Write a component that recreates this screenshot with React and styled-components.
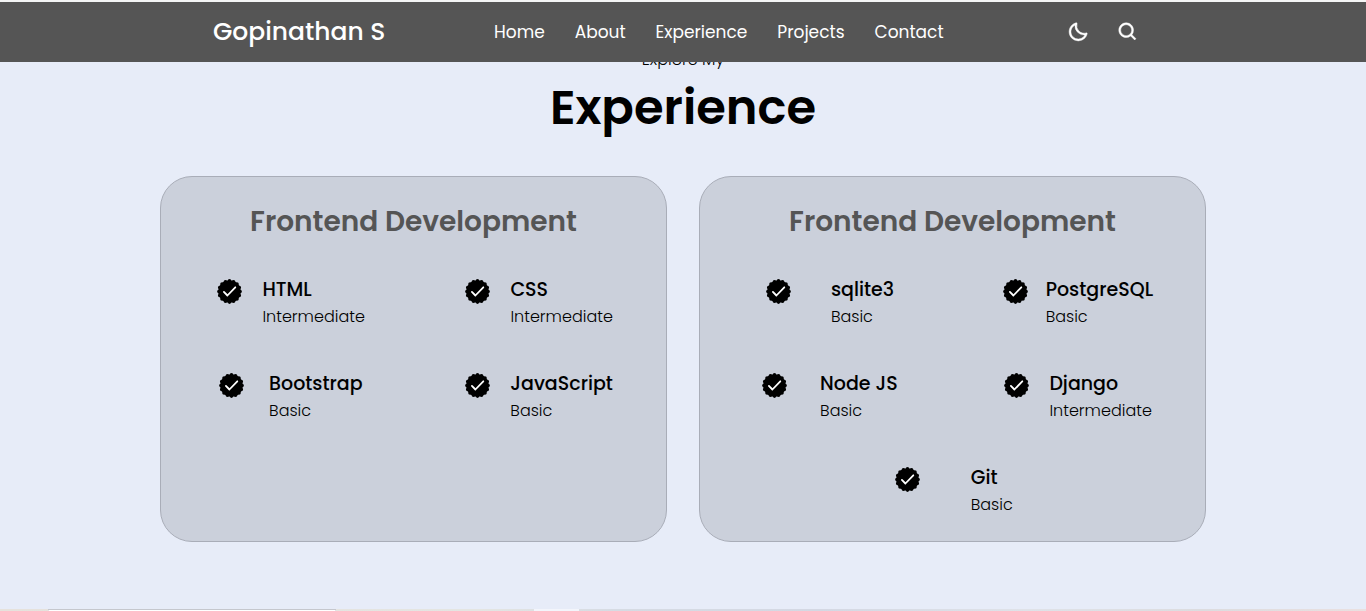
import React from "react";
import styled, { createGlobalStyle } from "styled-components";
import { BiMoon, BiSearch } from "react-icons/bi";

const GlobalStyle = createGlobalStyle`
  *, *::before, *::after { box-sizing: border-box; }
  body {
    margin: 0;
    background: #e7ecf8;
    color: #000;
    font-family: Poppins, Inter, "Open Sans", sans-serif;
  }
  h1, h2, h3, p, ul { margin: 0; padding: 0; }
  ul { list-style: none; }
`;

const Header = styled.header`
  position: sticky;
  top: 0;
  z-index: 1;
  border-top: 2px solid #f4f5f5;
  background: #555;
  color: #fff;
`;

const Bar = styled.div`
  display: grid;
  grid-template-columns: 281px auto 1fr;
  align-items: center;
  max-width: 940px;
  height: 60px;
  margin: 0 auto;
  padding-right: 14px;
`;

const Logo = styled.a`
  color: inherit;
  font-size: 25px;
  font-weight: 500;
  line-height: 40px;
  text-decoration: none;
  white-space: nowrap;
`;

const NavList = styled.ul`
  display: flex;
  gap: 30px;
`;

const NavLink = styled.a`
  color: inherit;
  font-size: 17px;
  font-weight: 400;
  line-height: 24px;
  text-decoration: none;
`;

const Actions = styled.div`
  display: flex;
  justify-content: flex-end;
  gap: 28px;
`;

const IconButton = styled.button`
  display: flex;
  padding: 0;
  border: 0;
  background: none;
  color: inherit;
  font-size: 22px;
  cursor: pointer;

  svg {
    overflow: visible;
    stroke: currentColor;
    stroke-width: 0.5px;
  }
`;

const Section = styled.section`
  max-width: 1046px;
  margin: -14px auto 0;
  padding-bottom: 67px;
`;

const Eyebrow = styled.p`
  font-size: 16px;
  font-weight: 300;
  line-height: 24px;
  text-align: center;
`;

const Title = styled.h1`
  font-size: 48px;
  font-weight: 600;
  line-height: 72px;
  text-align: center;
`;

const Cards = styled.div`
  display: grid;
  grid-template-columns: 1fr 1fr;
  gap: 32px;
  margin-top: 32px;
`;

const Card = styled.article`
  padding: 23px 42px 23px 45px;
  border: 1px solid #a9adb8;
  border-radius: 32px;
  background: #cbd0db;
`;

const CardTitle = styled.h2`
  margin: 0 0 32px -3px;
  color: #555;
  font-size: 28px;
  font-weight: 600;
  line-height: 44px;
  text-align: center;
  white-space: nowrap;
`;

const Skills = styled.ul`
  display: flex;
  flex-wrap: wrap;
  justify-content: center;
  gap: 40px 80px;
`;

const Skill = styled.li`
  display: flex;
  justify-content: space-around;
  width: 168px;
`;

const Badge = styled.svg`
  flex: none;
  width: 25px;
  height: 25px;
  margin-top: 3px;
`;

const SkillName = styled.h3`
  font-size: 19px;
  font-weight: 500;
  line-height: 27px;
`;

const SkillLevel = styled.p`
  font-size: 16px;
  font-weight: 300;
  line-height: 27px;
`;

const Preview = styled.div`
  display: flex;
  height: 2px;
  padding-left: 48px;
  background: linear-gradient(90deg, #e6e2dc, #e4e5e2 35%, #d6dbe3 45%, #d4d8e3 60%, #dfe2e8 75%, #dcdcdf 88%, #eae0e0);
`;

const PreviewPanel = styled.div`
  width: 288px;
  border: 1px solid #c5c7cd;
  border-bottom-color: #fff;
`;

const PreviewTab = styled.div`
  width: 45px;
  margin-left: 198px;
  background: #f3f5fb;
`;

const links = ["Home", "About", "Experience", "Projects", "Contact"];

const groups = [
  {
    id: "frontend",
    title: "Frontend Development",
    skills: [
      ["HTML", "Intermediate"],
      ["CSS", "Intermediate"],
      ["Bootstrap", "Basic"],
      ["JavaScript", "Basic"],
    ],
  },
  {
    id: "backend",
    title: "Frontend Development",
    skills: [
      ["sqlite3", "Basic"],
      ["PostgreSQL", "Basic"],
      ["Node JS", "Basic"],
      ["Django", "Intermediate"],
      ["Git", "Basic"],
    ],
  },
];

function CheckBadge() {
  return (
    <Badge viewBox="0 0 25 25" aria-hidden="true">
      <circle cx="12.5" cy="12.5" r="11.3" />
      <circle
        cx="12.5"
        cy="12.5"
        r="10.6"
        fill="none"
        stroke="#000"
        strokeWidth="3.6"
        strokeLinecap="round"
        pathLength="16"
        strokeDasharray="0 1"
      />
      <path
        d="M6.9 12.9l3.5 3.6 7.9-8.2"
        fill="none"
        stroke="#fff"
        strokeWidth="1.8"
        strokeLinecap="round"
        strokeLinejoin="round"
      />
    </Badge>
  );
}

export default function App() {
  return (
    <>
      <GlobalStyle />
      <Header>
        <Bar>
          <Logo href="#home">Gopinathan S</Logo>
          <nav>
            <NavList>
              {links.map((name) => (
                <li key={name}>
                  <NavLink href={`#${name.toLowerCase()}`}>{name}</NavLink>
                </li>
              ))}
            </NavList>
          </nav>
          <Actions>
            <IconButton type="button" aria-label="Dark mode">
              <BiMoon />
            </IconButton>
            <IconButton type="button" aria-label="Search">
              <BiSearch />
            </IconButton>
          </Actions>
        </Bar>
      </Header>
      <main>
        <Section id="experience">
          <Eyebrow>Explore My</Eyebrow>
          <Title>Experience</Title>
          <Cards>
            {groups.map((group) => (
              <Card key={group.id}>
                <CardTitle>{group.title}</CardTitle>
                <Skills>
                  {group.skills.map(([name, level]) => (
                    <Skill key={name}>
                      <CheckBadge />
                      <div>
                        <SkillName>{name}</SkillName>
                        <SkillLevel>{level}</SkillLevel>
                      </div>
                    </Skill>
                  ))}
                </Skills>
              </Card>
            ))}
          </Cards>
        </Section>
        <Preview>
          <PreviewPanel />
          <PreviewTab />
        </Preview>
      </main>
    </>
  );
}
